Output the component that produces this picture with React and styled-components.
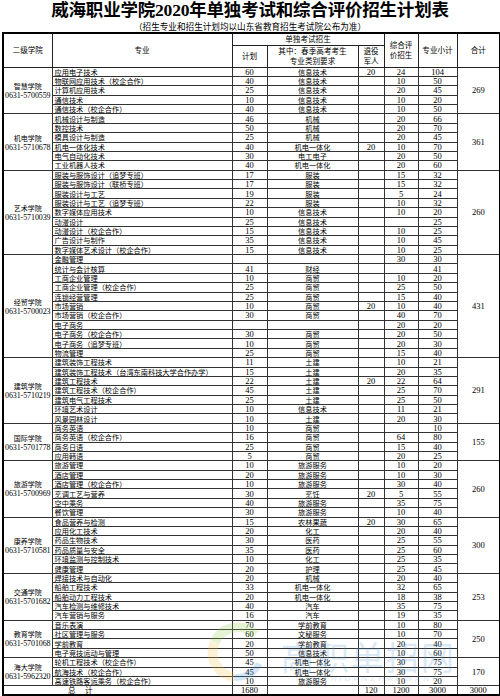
import React from "react"
import styled, { createGlobalStyle } from "styled-components"

const colleges = [
  {
    name: "智慧学院",
    tel: "0631-5700559",
    total: 269,
    rows: [
      ["应用电子技术", 60, "信息技术", 20, 24, 104],
      ["物联网应用技术（校企合作）", 40, "信息技术", "", 10, 50],
      ["计算机应用技术", 25, "信息技术", "", 20, 45],
      ["通信技术", 10, "信息技术", "", 10, 20],
      ["通信技术（校企合作）", 40, "信息技术", "", 10, 50],
    ],
  },
  {
    name: "机电学院",
    tel: "0631-5710678",
    total: 361,
    rows: [
      ["机械设计与制造", 46, "机械", "", 20, 66],
      ["数控技术", 50, "机械", "", 20, 70],
      ["模具设计与制造", 25, "机械", "", 20, 45],
      ["机电一体化技术", 40, "机电一体化", 20, 10, 70],
      ["电气自动化技术", 30, "电工电子", "", 20, 50],
      ["工业机器人技术", 40, "机电一体化", "", 20, 60],
    ],
  },
  {
    name: "艺术学院",
    tel: "0631-5710039",
    total: 260,
    rows: [
      ["服装与服饰设计（追梦专班）", 17, "服装", "", 15, 32],
      ["服装与服饰设计（联桥专班）", 17, "服装", "", 15, 32],
      ["服装设计与工艺", 19, "服装", "", 5, 24],
      ["服装设计与工艺（追梦专班）", 22, "服装", "", 10, 32],
      ["数字媒体应用技术", 10, "信息技术", "", 10, 20],
      ["动漫设计", 25, "信息技术", "", "", 25],
      ["动漫设计（校企合作）", 15, "信息技术", "", 10, 25],
      ["广告设计与制作", 35, "信息技术", "", 10, 45],
      ["数字媒体艺术设计（校企合作）", 15, "信息技术", "", 10, 25],
    ],
  },
  {
    name: "经贸学院",
    tel: "0631-5700023",
    total: 431,
    rows: [
      ["金融管理", "", "", "", 30, 30],
      ["统计与会计核算", 41, "财经", "", "", 41],
      ["工商企业管理", 10, "商贸", "", 10, 20],
      ["工商企业管理（校企合作）", 25, "商贸", "", 25, 50],
      ["连锁经营管理", 25, "商贸", "", 15, 40],
      ["市场营销", 10, "商贸", 20, 10, 40],
      ["市场营销（校企合作）", 30, "商贸", "", 40, 70],
      ["电子商务", "", "", "", 20, 20],
      ["电子商务（校企合作）", 30, "商贸", "", 20, 50],
      ["电子商务（追梦专班）", 10, "商贸", "", 20, 30],
      ["物流管理", 25, "商贸", "", 15, 40],
    ],
  },
  {
    name: "建筑学院",
    tel: "0631-5710219",
    total: 291,
    rows: [
      ["建筑装饰工程技术", 11, "土建", "", 10, 21],
      ["建筑装饰工程技术（台湾东南科技大学合作办学）", 15, "土建", "", 20, 35],
      ["建筑工程技术", 22, "土建", 20, 22, 64],
      ["建筑工程技术（校企合作）", 45, "土建", "", 25, 70],
      ["建筑电气工程技术", 25, "土建", "", 25, 50],
      ["环境艺术设计", 10, "信息技术", "", 11, 21],
      ["风景园林设计", 10, "土建", "", 20, 30],
    ],
  },
  {
    name: "国际学院",
    tel: "0631-5701778",
    total: 155,
    rows: [
      ["商务英语", 10, "商贸", "", "", 10],
      ["商务英语（校企合作）", 16, "商贸", "", 64, 80],
      ["商务日语", 25, "商贸", "", 15, 40],
      ["应用韩语", 5, "商贸", "", 20, 25],
    ],
  },
  {
    name: "旅游学院",
    tel: "0631-5700969",
    total: 260,
    rows: [
      ["旅游管理", 10, "旅游服务", "", 10, 20],
      ["酒店管理", 20, "旅游服务", "", 10, 30],
      ["酒店管理（校企合作）", 10, "旅游服务", "", 30, 40],
      ["烹调工艺与营养", 30, "烹饪", 20, 5, 55],
      ["空中乘务", 40, "旅游服务", "", 35, 75],
      ["餐饮管理", 30, "旅游服务", "", 10, 40],
    ],
  },
  {
    name: "康养学院",
    tel: "0631-5710581",
    total: 300,
    rows: [
      ["食品营养与检测", 15, "农林果蔬", 20, 30, 65],
      ["应用化工技术", 20, "化工", "", 20, 40],
      ["药品生物技术", 30, "医药", "", 25, 55],
      ["药品质量与安全", 35, "医药", "", 25, 60],
      ["环境监测与控制技术", 10, "化工", "", 25, 35],
      ["健康管理", 20, "护理", "", 25, 45],
    ],
  },
  {
    name: "交通学院",
    tel: "0631-5701682",
    total: 253,
    rows: [
      ["焊接技术与自动化", 20, "机械", "", 20, 40],
      ["船舶工程技术", 33, "机电一体化", "", 32, 65],
      ["船舶动力工程技术", 20, "机电一体化", "", 18, 38],
      ["汽车检测与维修技术", 40, "汽车", "", 35, 75],
      ["汽车营销与服务", 16, "汽车", "", 19, 35],
    ],
  },
  {
    name: "教育学院",
    tel: "0631-5701068",
    total: 250,
    rows: [
      ["音乐表演", 70, "学前教育", "", 10, 80],
      ["社区管理与服务", 60, "文秘服务", "", 10, 70],
      ["学前教育", 20, "学前教育", "", 20, 40],
      ["电子竞技运动与管理", 50, "信息技术", "", 10, 60],
    ],
  },
  {
    name: "海大学院",
    tel: "0631-5962320",
    total: 170,
    rows: [
      ["轮机工程技术（校企合作）", 45, "机电一体化", "", 30, 75],
      ["航海技术（校企合作）", 45, "机电一体化", "", 30, 75],
      ["高速铁路客运乘务（校企合作）", 10, "旅游服务", "", 10, 20],
    ],
  },
]

const GlobalStyle = createGlobalStyle`
  html, body {
    margin: 0;
    padding: 0;
    background: #fff;
  }
  body {
    font-family: "Liberation Serif", "Noto Sans CJK SC", serif;
    color: #000;
  }
`

function App() {
  return (
    <Page>
      <GlobalStyle />
      <Title>威海职业学院2020年单独考试和综合评价招生计划表</Title>
      <Subtitle>（招生专业和招生计划均以山东省教育招生考试院公布为准）</Subtitle>
      <Table>
        <colgroup>
          <col style={{ width: 49 }} />
          <col style={{ width: 180 }} />
          <col style={{ width: 35 }} />
          <col style={{ width: 91 }} />
          <col style={{ width: 26 }} />
          <col style={{ width: 34 }} />
          <col style={{ width: 39 }} />
          <col style={{ width: 43 }} />
        </colgroup>
        <thead>
          <HeadRow $h={12}>
            <Th rowSpan={2}>二级学院</Th>
            <Th rowSpan={2}>专业</Th>
            <Th colSpan={3}>单独考试招生</Th>
            <Th rowSpan={2}>
              综合评
              <br />
              价招生
            </Th>
            <Th rowSpan={2}>专业小计</Th>
            <Th rowSpan={2}>合计</Th>
          </HeadRow>
          <HeadRow $h={22}>
            <Th>计划</Th>
            <Th>
              其中：春季高考考生
              <br />
              专业类别要求
            </Th>
            <Th>
              退役
              <br />
              军人
            </Th>
          </HeadRow>
        </thead>
        <tbody>
          {colleges.map((c) =>
            c.rows.map((r, i) => (
              <Row key={c.name + i} $first={i === 0}>
                {i === 0 && (
                  <College rowSpan={c.rows.length}>
                    <CollegeName>{c.name}</CollegeName>
                    <Tel>{c.tel}</Tel>
                  </College>
                )}
                <Major>{r[0]}</Major>
                <Num>{r[1]}</Num>
                <Category>{r[2]}</Category>
                <Num>{r[3]}</Num>
                <Num>{r[4]}</Num>
                <Num>{r[5]}</Num>
                {i === 0 && <Sum rowSpan={c.rows.length}>{c.total}</Sum>}
              </Row>
            ))
          )}
          <Row $first>
            <TotalLabel colSpan={2}>总　 计</TotalLabel>
            <Num>1680</Num>
            <Num />
            <Num>120</Num>
            <Num>1200</Num>
            <Num>3000</Num>
            <Sum>3000</Sum>
          </Row>
        </tbody>
      </Table>
      <Watermark>
        <svg width="62" height="62" viewBox="0 0 64 64">
          <path d="M52 14 A26 26 0 0 0 10 22" fill="none" stroke="#8cc63f" strokeWidth="10" />
          <path d="M10 22 A26 26 0 0 0 30 58" fill="none" stroke="#f5c242" strokeWidth="10" />
          <path d="M30 58 A26 26 0 0 0 56 44" fill="none" stroke="#3a8fd8" strokeWidth="7" />
        </svg>
        <WatermarkText>
          <Brand>高职单招网</Brand>
          <BrandSub>GAOZHIDANZHAOWANG</BrandSub>
        </WatermarkText>
      </Watermark>
    </Page>
  )
}

export default App

const Page = styled.div`
  position: relative;
  width: 500px;
  height: 696px;
  overflow: hidden;
`

const Title = styled.div`
  height: 21px;
  line-height: 21px;
  text-align: center;
  font-size: 17.5px;
  font-weight: bold;
  letter-spacing: -0.2px;
`

const Subtitle = styled.div`
  height: 11px;
  line-height: 10px;
  text-align: center;
  font-family: "Noto Sans CJK SC", sans-serif;
  font-size: 8.6px;
`

const Table = styled.table`
  margin-left: 2px;
  width: 497px;
  table-layout: fixed;
  border-collapse: collapse;
  border: 2px solid #000;
`

const HeadRow = styled.tr`
  height: ${(p) => p.$h}px;
`

const Th = styled.th`
  padding: 0;
  border: 1px solid #222;
  font-weight: normal;
  font-family: "Noto Sans CJK SC", sans-serif;
  font-size: 7.6px;
  line-height: 10px;
  text-align: center;
  vertical-align: middle;
  white-space: nowrap;
`

const Row = styled.tr`
  height: 9.39px;
  & > td {
    border-top: ${(p) => (p.$first ? "1.5px solid #000" : "1px solid #333")};
  }
`

const Cell = styled.td`
  padding: 0;
  border: 1px solid #333;
  font-size: 8px;
  line-height: 8px;
  white-space: nowrap;
  overflow: hidden;
  vertical-align: middle;
`

const College = styled(Cell)`
  text-align: center;
  overflow: visible;
`

const CollegeName = styled.div`
  font-family: "Noto Sans CJK SC", sans-serif;
  font-size: 7px;
  line-height: 10px;
`

const Tel = styled.div`
  font-size: 8px;
  line-height: 9px;
  letter-spacing: -0.1px;
`

const Major = styled(Cell)`
  padding-left: 2px;
  text-align: left;
  font-family: "Noto Sans CJK SC", sans-serif;
  font-size: 7.2px;
`

const Category = styled(Cell)`
  text-align: center;
  font-family: "Noto Sans CJK SC", sans-serif;
  font-size: 7.2px;
`

const Num = styled(Cell)`
  text-align: center;
  font-size: 8.5px;
`

const Sum = styled(Num)`
  border-right: 2px solid #000;
`

const TotalLabel = styled(Cell)`
  padding-left: 64px;
  text-align: left;
  font-family: "Noto Sans CJK SC", sans-serif;
  font-size: 7.6px;
`

const Watermark = styled.div`
  position: absolute;
  left: 205px;
  top: 621px;
  display: flex;
  align-items: center;
  gap: 14px;
  opacity: 0.22;
  pointer-events: none;
`

const WatermarkText = styled.div`
  display: flex;
  flex-direction: column;
  align-items: center;
`

const Brand = styled.div`
  font-family: "Noto Sans CJK SC", sans-serif;
  font-size: 33px;
  line-height: 36px;
  letter-spacing: 2px;
  color: #5b9bd5;
  margin-top: 16px;
`

const BrandSub = styled.div`
  font-family: "Liberation Sans", sans-serif;
  font-size: 8px;
  letter-spacing: 3px;
  color: #5b9bd5;
`
